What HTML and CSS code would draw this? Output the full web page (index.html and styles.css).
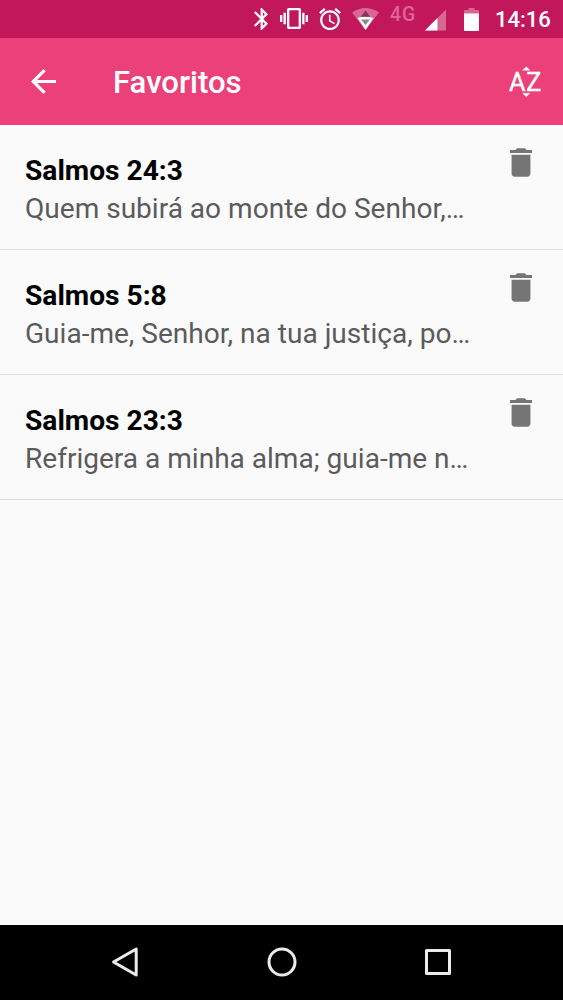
FILE: index.html
```html
<!DOCTYPE html>
<html lang="pt">
<head>
<meta charset="utf-8">
<title>Favoritos</title>
<link rel="stylesheet" href="styles.css">
</head>
<body>
<div class="screen">
  <div class="status">
    <svg class="bluetooth" viewBox="5 2 12.7 20"><path d="M17.71 7.71L12 2h-1v7.59L6.41 5 5 6.41 10.59 12 5 17.59 6.41 19 11 14.41V22h1l5.71-5.71-4.3-4.29 4.3-4.29zM13 5.83l1.88 1.88L13 9.59V5.83zm1.88 10.46L13 18.17v-3.76l1.88 1.88z"/></svg>
    <svg class="vibrate" viewBox="0 3 24 18"><path d="M0 15h2V9H0v6zm3 2h2V7H3v10zm19-8v6h2V9h-2zm-3 8h2V7h-2v10zM16.5 3h-9C6.67 3 6 3.67 6 4.5v15c0 .83.67 1.5 1.5 1.5h9c.83 0 1.5-.67 1.5-1.5v-15c0-.83-.67-1.5-1.5-1.5zM16 19H8V5h8v14z"/></svg>
    <svg class="alarm" viewBox="2 1.86 20 20.14"><path d="M22 5.72l-4.6-3.86-1.29 1.53 4.6 3.86L22 5.72zM7.88 3.39L6.6 1.86 2 5.71l1.29 1.53 4.59-3.85zM12.5 8H11v6l4.75 2.85.75-1.23-4-2.37V8zM12 4c-4.97 0-9 4.03-9 9s4.02 9 9 9c4.97 0 9-4.03 9-9s-4.03-9-9-9zm0 16c-3.87 0-7-3.13-7-7s3.13-7 7-7 7 3.13 7 7-3.13 7-7 7z"/></svg>
    <svg class="wifi" viewBox="0 0 27 22"><path class="faded" d="M0 4.5Q13.5-4.5 27 4.5L13.5 22Z"/><path d="M5.500 10Q13.5 7 21.500 10L13.5 22Z"/><path class="hint" d="M13.5 2.5L18 8.8H9Z"/><path class="hint-low" d="M9 11.500h9L13.500 17Z"/></svg>
    <span class="network">4G</span>
    <svg class="signal" viewBox="0 0 22 22"><path class="faded" d="M22 0v22H0Z"/><path d="M13 9v13H0Z"/></svg>
    <svg class="battery" viewBox="0 0 15 23"><path class="faded" d="M4.500 0h6v2H14q1 0 1 1v3H0V3q0-1 1-1h3.500Z"/><path d="M0 5.500h15V22q0 1-1 1H1q-1 0-1-1Z"/></svg>
    <span class="clock">14:16</span>
  </div>
  <header class="toolbar">
    <svg class="back" viewBox="4 4 16 16"><path d="M20 11H7.830l5.590-5.590L12 4l-8 8 8 8 1.410-1.410L7.830 13H20v-2z"/></svg>
    <h1 class="title">Favoritos</h1>
    <svg class="sort" viewBox="0 0 34 32"><path d="M13.700 4.200l3.600-3.500 3.600 3.500ZM13.700 27.300h7.200L17.300 30.800Z"/><text x="0" y="24.500">A</text><text x="17.300" y="24.500">Z</text></svg>
  </header>
  <main class="list">
    <article class="row">
      <div class="verse"><h2 class="ref">Salmos 24:3</h2><p class="text">Quem subirá ao monte do Senhor,…</p></div>
      <svg class="trash" viewBox="5 3 14 18"><path d="M6 19c0 1.100.9 2 2 2h8c1.100 0 2-.9 2-2V7H6v12zM19 4h-3.500l-1-1h-5l-1 1H5v2h14V4z"/></svg>
    </article>
    <article class="row">
      <div class="verse"><h2 class="ref">Salmos 5:8</h2><p class="text">Guia-me, Senhor, na tua justiça, po…</p></div>
      <svg class="trash" viewBox="5 3 14 18"><path d="M6 19c0 1.100.9 2 2 2h8c1.100 0 2-.9 2-2V7H6v12zM19 4h-3.500l-1-1h-5l-1 1H5v2h14V4z"/></svg>
    </article>
    <article class="row">
      <div class="verse"><h2 class="ref">Salmos 23:3</h2><p class="text">Refrigera a minha alma; guia-me n…</p></div>
      <svg class="trash" viewBox="5 3 14 18"><path d="M6 19c0 1.100.9 2 2 2h8c1.100 0 2-.9 2-2V7H6v12zM19 4h-3.500l-1-1h-5l-1 1H5v2h14V4z"/></svg>
    </article>
  </main>
  <nav class="navbar">
    <svg class="nav-icon" viewBox="0 0 32 32"><path d="M27.200 3v26L4.500 16Z"/></svg>
    <svg class="nav-icon" viewBox="0 0 32 32"><circle cx="16" cy="16" r="13"/></svg>
    <svg class="nav-icon" viewBox="0 0 32 32"><rect x="4.500" y="4.500" width="23" height="23"/></svg>
  </nav>
</div>
</body>
</html>
```

FILE: styles.css
```css
* { box-sizing: border-box; }
body { margin: 0; font-family: Roboto, sans-serif; }
h1, h2, p { margin: 0; }
svg { display: block; flex: none; fill: #fff; }

.screen { display: flex; flex-direction: column; width: 563px; height: 1000px; background: #fafafb; }

.status { display: flex; align-items: flex-start; height: 38px; padding: 8px 12px 0 254px; background: #c2185b; color: #fff; }
.bluetooth { width: 14px; height: 22px; }
.vibrate { width: 28px; height: 21px; margin-left: 12px; }
.alarm { width: 22px; height: 22px; margin-left: 11px; }
.wifi { width: 27px; height: 22px; margin-left: 11px; }
.faded { opacity: .35; }
.hint { fill: #87305c; }
.hint-low { fill: #8b8b8b; }
.network { width: 28px; margin: -4px 0 0 11px; font-size: 19.500px; line-height: 22px; font-weight: 500; letter-spacing: 1px; color: #d9669a; }
.signal { width: 21px; height: 22px; margin: 1px 0 0 7px; }
.battery { width: 15px; height: 23px; margin-left: 18px; }
.clock { margin: 0 0 0 16px; font-size: 22px; line-height: 24px; font-weight: 500; white-space: nowrap; }

.toolbar { display: flex; align-items: center; height: 87px; padding: 0 20px 0 31px; background: #ec407a; }
.back { width: 25px; height: 25px; }
.title { flex: 1; margin-left: 57px; padding-top: 2px; font-size: 31.100px; line-height: 38px; font-weight: 500; color: #fff; }
.sort { width: 34px; height: 32px; font-size: 25.200px; stroke: #fff; stroke-width: .4; }

.list { flex: 1; }
.row { display: flex; justify-content: space-between; height: 125px; padding: 23px 31px 0 25px; border-bottom: 1px solid #dcdcdd; }
.ref { padding-top: 4px; font-size: 28.150px; line-height: 38px; font-weight: 700; color: #000; }
.text { font-size: 28.050px; line-height: 38px; color: #5b5b5c; white-space: nowrap; }
.trash { width: 22px; height: 29px; fill: #757576; }

.navbar { display: flex; justify-content: space-between; align-items: center; height: 75px; padding: 0 109px 1px; background: #000; }
.nav-icon { width: 32px; height: 32px; fill: none; stroke: #ebebeb; stroke-width: 3; stroke-linejoin: round; }
```
